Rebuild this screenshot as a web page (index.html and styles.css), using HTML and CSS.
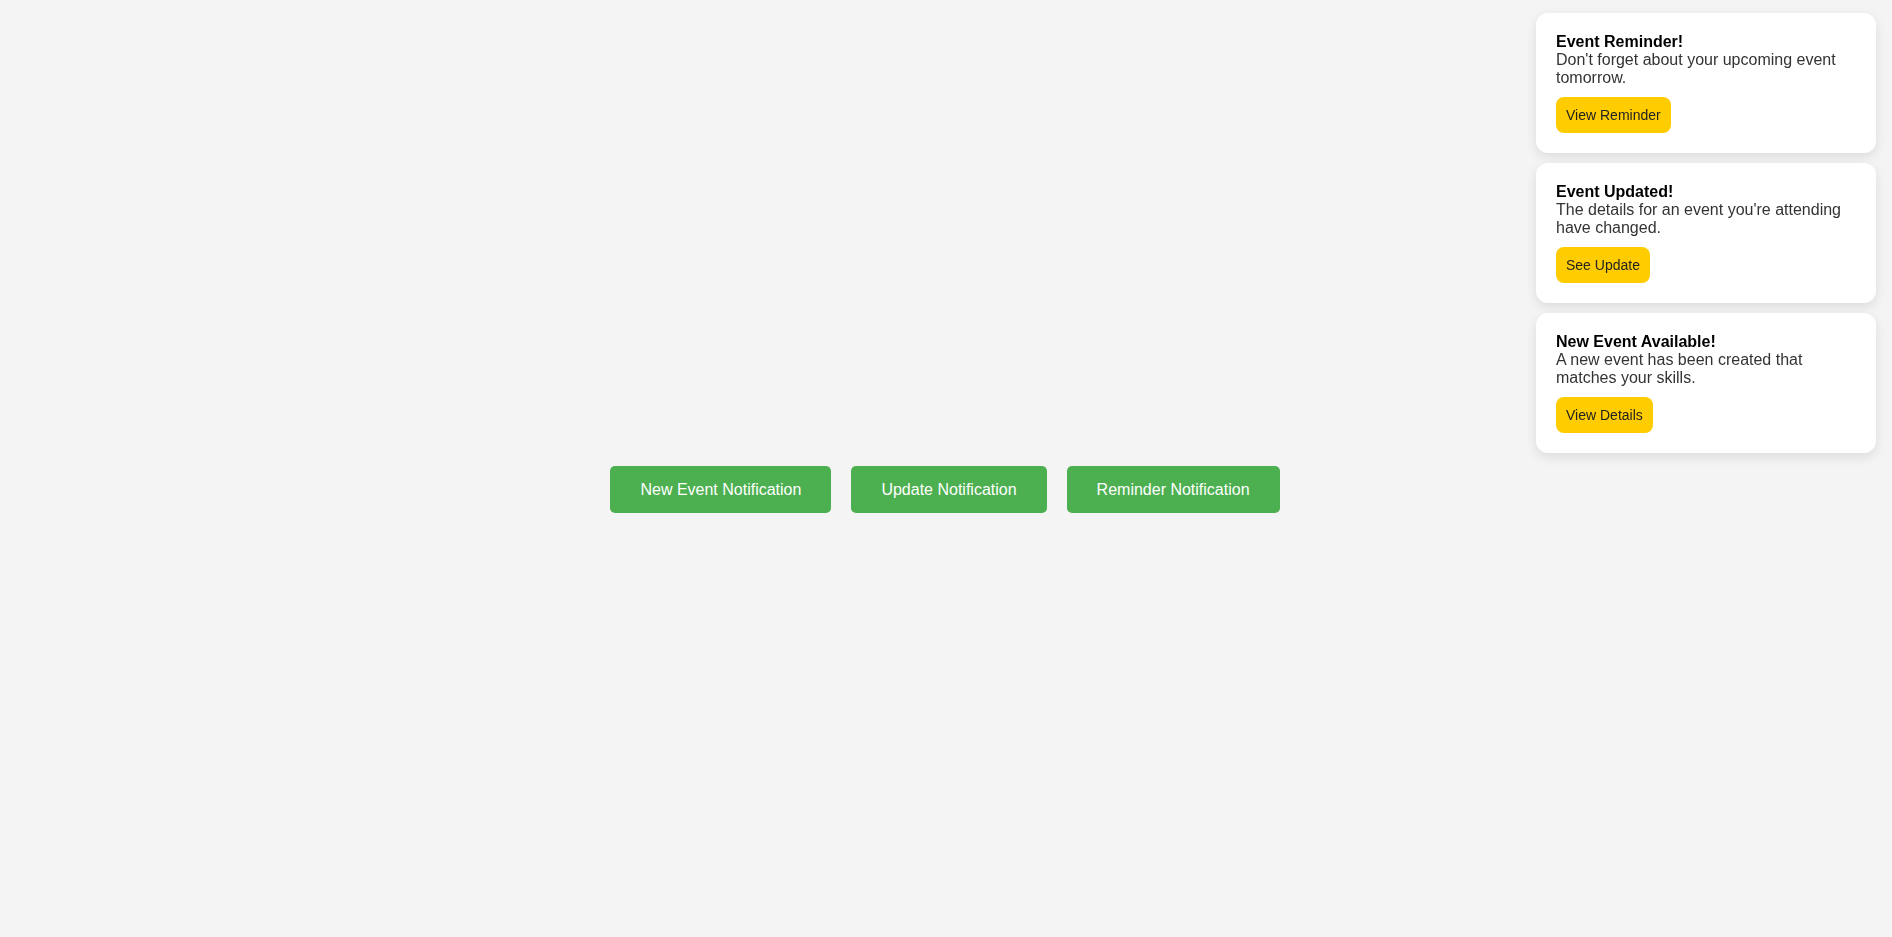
FILE: index.html
```html
<!DOCTYPE html>
<html lang="en">
<head>
<meta charset="utf-8">
<title>Event Notifications</title>
<link rel="stylesheet" href="styles.css">
</head>
<body>
<main class="stage">
  <div class="actions">
    <button class="action-btn">New Event Notification</button>
    <button class="action-btn">Update Notification</button>
    <button class="action-btn">Reminder Notification</button>
  </div>
</main>
<aside class="notifications">
  <div class="card">
    <div class="card-title">Event Reminder!</div>
    <div class="card-text">Don't forget about your upcoming event tomorrow.</div>
    <button class="card-btn">View Reminder</button>
  </div>
  <div class="card">
    <div class="card-title">Event Updated!</div>
    <div class="card-text">The details for an event you're attending have changed.</div>
    <button class="card-btn">See Update</button>
  </div>
  <div class="card">
    <div class="card-title">New Event Available!</div>
    <div class="card-text">A new event has been created that matches your skills.</div>
    <button class="card-btn">View Details</button>
  </div>
</aside>
</body>
</html>
```
FILE: styles.css
```css
* { box-sizing: border-box; }
html, body {
  margin: 0;
  padding: 0;
  background: #f4f4f4;
  font-family: "Liberation Sans", Arial, sans-serif;
}
.stage {
  height: 100vh;
  display: flex;
  align-items: center;
  justify-content: center;
  padding: 42px 2px 0 0;
}
.actions {
  display: flex;
  gap: 20px;
}
.action-btn {
  font-family: "Liberation Sans", Arial, sans-serif;
  font-size: 16px;
  line-height: normal;
  color: #fff;
  background: #4caf50;
  border: 0;
  border-radius: 5px;
  padding: 14.5px 30px;
  cursor: pointer;
}
.notifications {
  position: fixed;
  top: 13px;
  right: 16px;
  width: 340px;
  display: flex;
  flex-direction: column;
  gap: 10px;
}
.card {
  background: #fff;
  border-radius: 12px;
  padding: 20px;
  box-shadow: 0 4px 12px rgba(0, 0, 0, 0.1);
  font-size: 16px;
  line-height: normal;
}
.card-title {
  font-weight: bold;
  color: #000;
}
.card-text {
  color: #333;
}
.card-btn {
  display: block;
  margin-top: 10px;
  font-family: "Liberation Sans", Arial, sans-serif;
  font-size: 14px;
  line-height: normal;
  color: #222;
  background: #ffcc00;
  border: 0;
  border-radius: 8px;
  padding: 10px;
  cursor: pointer;
}
```
